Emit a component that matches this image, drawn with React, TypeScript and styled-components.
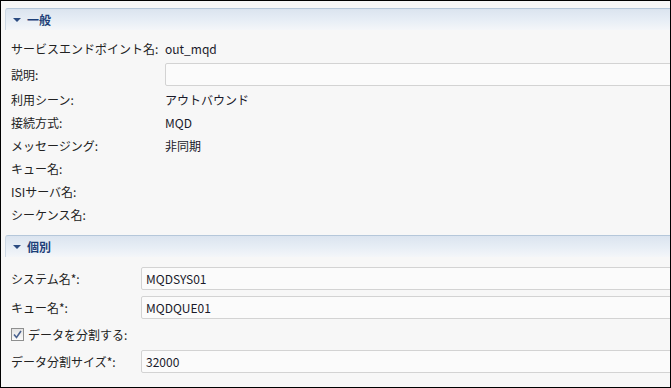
import React from 'react';
import styled, { createGlobalStyle } from 'styled-components';

const GlobalStyle = createGlobalStyle`
  body {
    margin: 0;
    background: #ffffff;
    font-family: "Noto Sans CJK JP", "Noto Sans", sans-serif;
  }
`;

const Frame = styled.div`
  width: 671px;
  height: 388px;
  box-sizing: border-box;
  border: 1px solid #000;
  background: #f7f7f7;
  overflow: hidden;
  padding-top: 7px;
  font-size: 12px;
  color: #222;
`;

const Section = styled.section<{ $gapTop?: number }>`
  margin-left: 4px;
  margin-top: ${(p) => p.$gapTop ?? 0}px;
`;

const SectionHeader = styled.div`
  display: flex;
  align-items: center;
  gap: 6px;
  height: 21px;
  padding-left: 7px;
  border-top: 1px solid #b5c7da;
  border-left: 1px solid #cdd8e4;
  border-top-left-radius: 3px;
  background: linear-gradient(to bottom, #dbe4ef 0%, #e6edf5 50%, #f4f6f9 100%);
  color: #1c3f78;
  font-weight: bold;
  font-size: 12px;
`;

const Twisty = styled.span`
  width: 0;
  height: 0;
  border-left: 4px solid transparent;
  border-right: 4px solid transparent;
  border-top: 4px solid #2b4b80;
  margin-top: 1px;
`;

const Body = styled.div<{ $labelWidth: number }>`
  display: grid;
  grid-template-columns: ${(p) => p.$labelWidth}px 1fr;
  padding: 7px 0 0 6px;
`;

const Row = styled.div<{ $h: number }>`
  display: contents;

  & > * {
    height: ${(p) => p.$h}px;
  }
`;

const Label = styled.div`
  display: flex;
  align-items: center;
  white-space: nowrap;
  color: #222;
`;

const Value = styled.div`
  display: flex;
  align-items: center;
  color: #1a1a2a;
`;

const InputCell = styled.div`
  display: flex;
  align-items: center;
  margin-right: -12px;
`;

const TextInput = styled.div`
  flex: 1;
  height: 23px;
  box-sizing: border-box;
  border: 1px solid #d3d3d3;
  border-radius: 2px;
  background: #fbfbfb;
  padding-left: 4px;
  display: flex;
  align-items: center;
  color: #1a1a2a;
`;

const CheckRow = styled.div<{ $h: number }>`
  grid-column: 1 / -1;
  height: ${(p) => p.$h}px;
  display: flex;
  align-items: center;
  gap: 4px;
`;

const CheckBox = styled.span`
  width: 13px;
  height: 13px;
  box-sizing: border-box;
  border: 1px solid #8e8f8f;
  background: linear-gradient(to bottom, #e4e4e4, #fbfbfb);
  display: flex;
  align-items: center;
  justify-content: center;
`;

const Check = () => (
  <svg width="9" height="9" viewBox="0 0 9 9">
    <path d="M1 4.5 L3.5 7.5 L8 1" stroke="#4a6290" strokeWidth="1.6" fill="none" />
  </svg>
);

type Field = { label: string; value?: string; input?: boolean };

const general: Field[] = [
  { label: 'サービスエンドポイント名:', value: 'out_mqd' },
  { label: '説明:', input: true, value: '' },
  { label: '利用シーン:', value: 'アウトバウンド' },
  { label: '接続方式:', value: 'MQD' },
  { label: 'メッセージング:', value: '非同期' },
  { label: 'キュー名:' },
  { label: 'ISIサーバ名:' },
  { label: 'シーケンス名:' },
];

const FieldRow = ({ field, h }: { field: Field; h: number }) => (
  <Row $h={h}>
    <Label>{field.label}</Label>
    {field.input ? (
      <InputCell>
        <TextInput>{field.value}</TextInput>
      </InputCell>
    ) : (
      <Value>{field.value}</Value>
    )}
  </Row>
);

const App = () => {
  return (
    <>
      <GlobalStyle />
      <Frame>
        <Section>
          <SectionHeader>
            <Twisty />
            一般
          </SectionHeader>
          <Body $labelWidth={154}>
            {general.map((f) => (
              <FieldRow key={f.label} field={f} h={f.input ? 28 : 23} />
            ))}
          </Body>
        </Section>
        <Section $gapTop={9}>
          <SectionHeader>
            <Twisty />
            個別
          </SectionHeader>
          <Body $labelWidth={130}>
            <FieldRow field={{ label: 'システム名*:', value: 'MQDSYS01', input: true }} h={29} />
            <FieldRow field={{ label: 'キュー名*:', value: 'MQDQUE01', input: true }} h={29} />
            <CheckRow $h={25}>
              <CheckBox>
                <Check />
              </CheckBox>
              データを分割する:
            </CheckRow>
            <FieldRow field={{ label: 'データ分割サイズ*:', value: '32000', input: true }} h={28} />
          </Body>
        </Section>
      </Frame>
    </>
  );
};

export default App;
